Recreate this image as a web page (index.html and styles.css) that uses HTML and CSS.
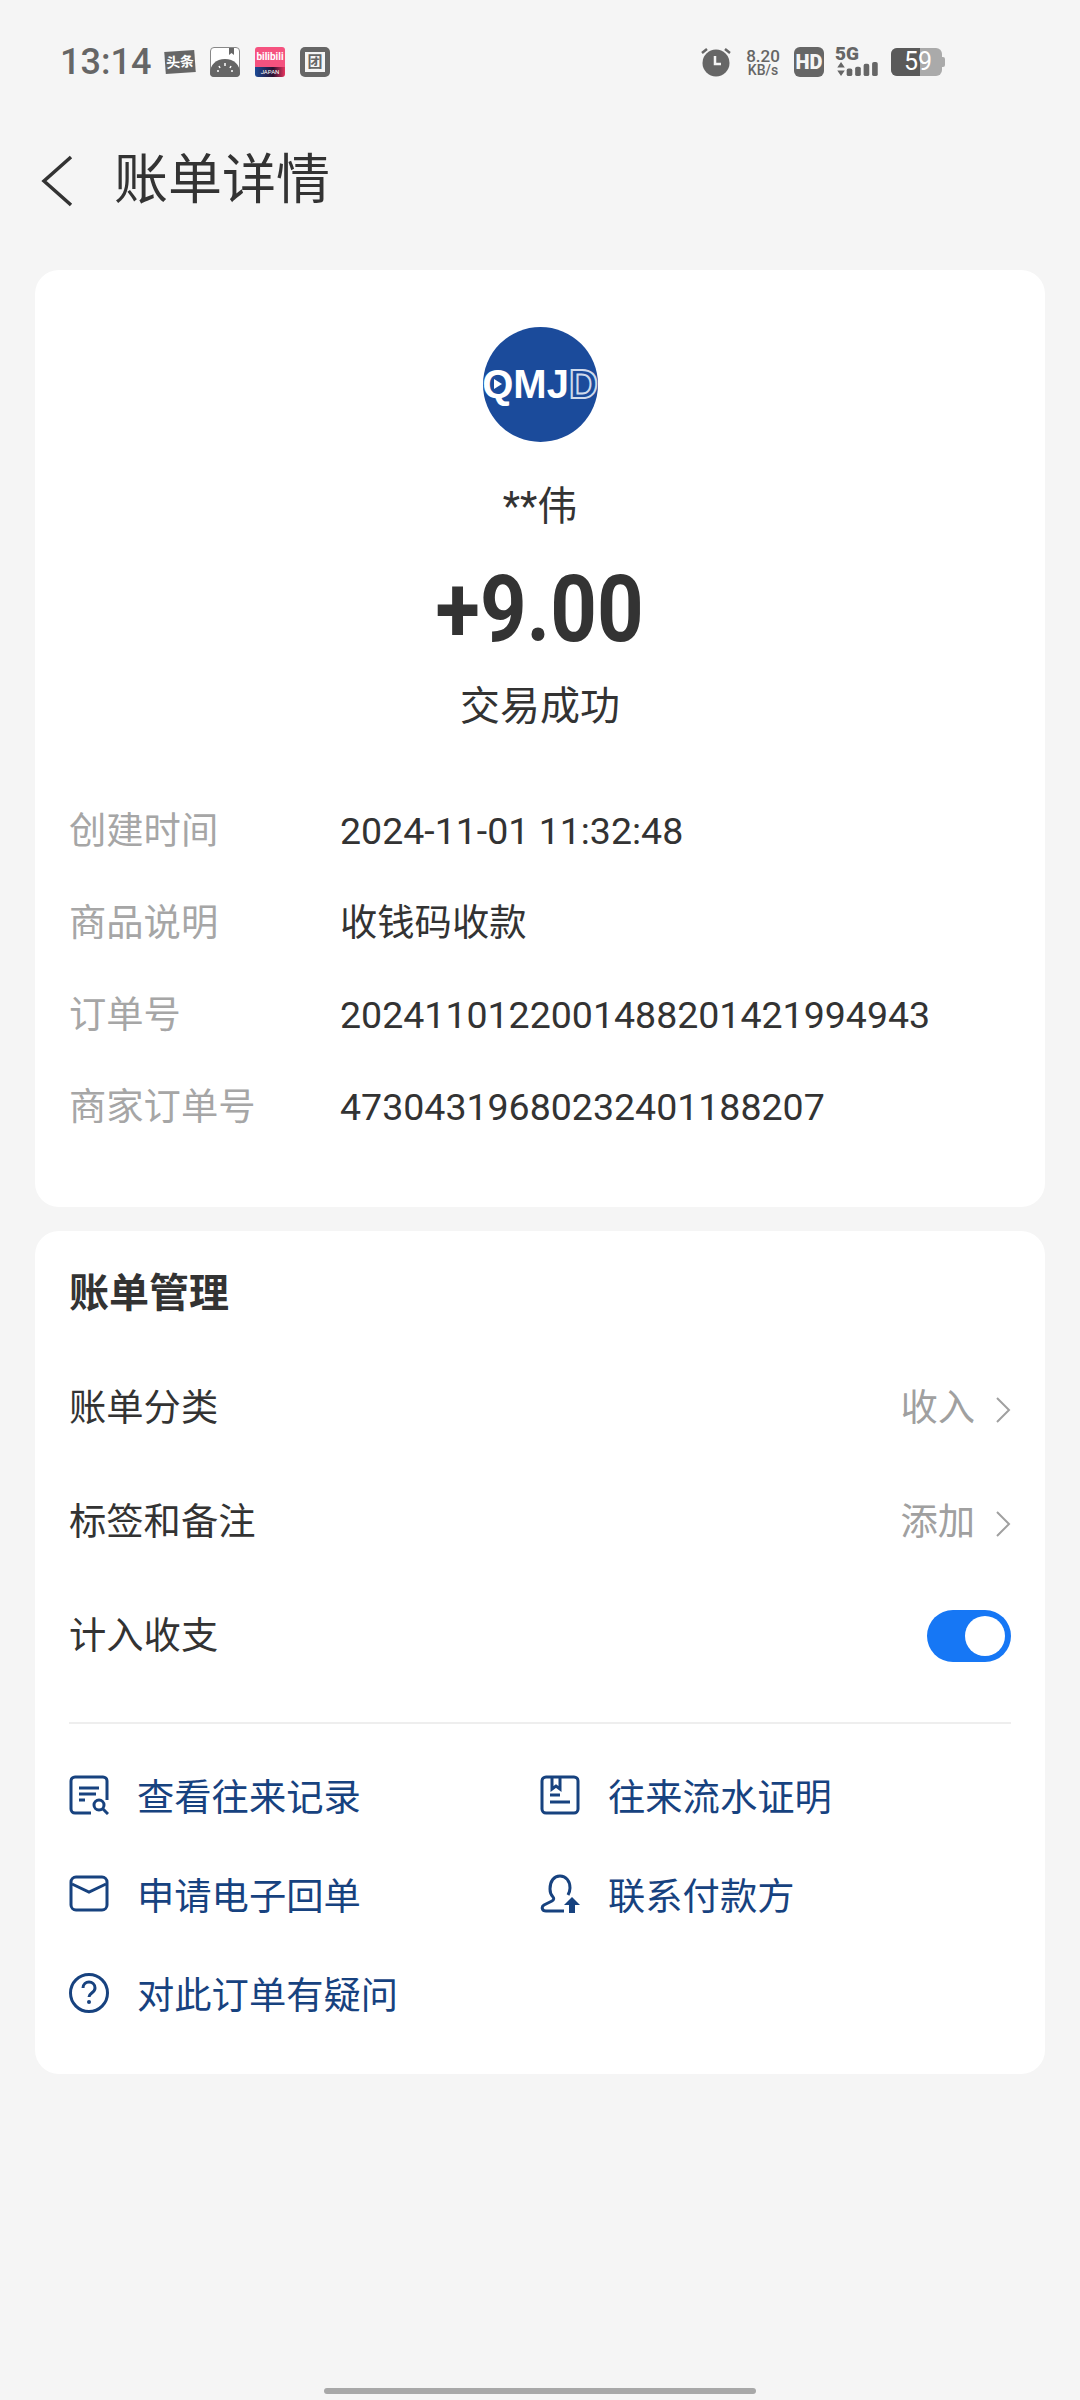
FILE: index.html
```html
<!DOCTYPE html>
<html lang="zh-CN">
<head>
    <meta charset="UTF-8">
    <meta name="viewport" content="width=device-width, initial-scale=1.0">
    <title>账单详情</title>
    <link rel="stylesheet" href="styles.css">
</head>
<body>
    <div class="statusbar">
        <div class="status-left">
            <span class="time">13:14</span>
            <span class="toutiao">头条</span>
            <svg class="sicon" viewBox="0 0 30 30">
                <path d="M4 .5h22a3.500 3.500 0 0 1 3.500 3.500v22a3.500 3.500 0 0 1-3.500 3.500H4A3.500 3.500 0 0 1 .5 26V4A3.500 3.500 0 0 1 4 .5z" fill="#fff" stroke="#888"/>
                <path d="M19 1h5v7l-2.500-2-2.500 2z" fill="#666"/>
                <path d="M0 26c0-8 6-14 15-14s15 6 15 14a4 4 0 0 1-4 4H4a4 4 0 0 1-4-4z" fill="#666"/>
                <path d="M15 16v3M9 19l1 2M21 19l-1 2M7 24h2M21 24h2" stroke="#fff" stroke-width="1.500"/>
            </svg>
            <span class="bili"><span class="bili-top">bilibili</span><span class="bili-bot">JAPAN</span></span>
            <span class="tuan"><span class="tuan-in">团</span></span>
        </div>
        <div class="status-right">
            <svg class="sicon alarm" viewBox="0 0 30 30">
                <path d="M1 6l5-4M29 6l-5-4" stroke="#666" stroke-width="2.500"/>
                <circle cx="15" cy="16" r="13.500" fill="#666"/>
                <path d="M14 9v8h6" stroke="#f5f5f5" stroke-width="2.500" fill="none"/>
            </svg>
            <span class="speed"><b>8.20</b><b class="unit">KB/s</b></span>
            <span class="hd">HD</span>
            <span class="net">
                <span class="net-5g">5G</span>
                <svg class="net-bars" viewBox="0 0 45 17">
                    <path d="M5 1l4 6H1zM1 10h8l-4 6z" fill="#666"/>
                    <rect x="11" y="8" width="6" height="8" rx="2" fill="#666"/>
                    <rect x="20" y="6" width="6" height="10" rx="2" fill="#666"/>
                    <rect x="29" y="3" width="6" height="13" rx="2" fill="#666"/>
                    <rect x="38" y="1" width="6" height="15" rx="2" fill="#666"/>
                </svg>
            </span>
            <span class="battery">
                <span class="battery-body"><span class="battery-fill"></span><span class="battery-num">59</span></span>
                <span class="battery-nub"></span>
            </span>
        </div>
    </div>

    <div class="header">
        <svg class="back" viewBox="0 0 32 52"><path d="M30 2L3 26l27 24" fill="none" stroke="#333" stroke-width="3.500"/></svg>
        <span class="title">账单详情</span>
    </div>

    <div class="card card-top">
        <div class="avatar">
            <span class="logo"><span class="logo-q">Q<span class="logo-play"></span></span>MJ<span class="logo-d">D</span></span>
        </div>
        <div class="name">**伟</div>
        <div class="amount">+9.00</div>
        <div class="state">交易成功</div>

        <div class="info">
            <div class="info-row"><span class="info-label cjk">创建时间</span><span class="digits">2024-11-01 11:32:48</span></div>
            <div class="info-row"><span class="info-label cjk">商品说明</span><span class="cjk">收钱码收款</span></div>
            <div class="info-row"><span class="info-label cjk">订单号</span><span class="digits">2024110122001488201421994943</span></div>
            <div class="info-row"><span class="info-label cjk">商家订单号</span><span class="digits">47304319680232401188207</span></div>
        </div>
    </div>

    <div class="card card-manage">
        <div class="manage-title">账单管理</div>
        <div class="manage-row">
            <span class="cjk">账单分类</span>
            <span class="manage-value cjk">收入
                <svg class="arrow" viewBox="0 0 16 26"><path d="M2 1l12 12L2 25" fill="none" stroke="#a0a0a0" stroke-width="2"/></svg>
            </span>
        </div>
        <div class="manage-row">
            <span class="cjk">标签和备注</span>
            <span class="manage-value cjk">添加
                <svg class="arrow" viewBox="0 0 16 26"><path d="M2 1l12 12L2 25" fill="none" stroke="#a0a0a0" stroke-width="2"/></svg>
            </span>
        </div>
        <div class="manage-row">
            <span class="cjk">计入收支</span>
            <span class="switch"><span class="knob"></span></span>
        </div>

        <div class="links">
            <div class="link">
                <svg class="link-icon" viewBox="0 0 40 40">
                    <path d="M22 38H6a4 4 0 0 1-4-4V6a4 4 0 0 1 4-4h28a4 4 0 0 1 4 4v19" fill="none" stroke="#17427f" stroke-width="3"/>
                    <path d="M10 13h20M10 19h17M10 25h6" stroke="#17427f" stroke-width="3"/>
                    <circle cx="30" cy="30" r="5" fill="none" stroke="#17427f" stroke-width="3"/>
                    <path d="M34 34l5 5" stroke="#17427f" stroke-width="3"/>
                </svg>
                <span>查看往来记录</span>
            </div>
            <div class="link">
                <svg class="link-icon" viewBox="0 0 40 40">
                    <rect x="2" y="2" width="36" height="36" rx="4" fill="none" stroke="#17427f" stroke-width="3"/>
                    <path d="M12 2v12l4-3 4 3V2M10 20h10M10 27h20" fill="none" stroke="#17427f" stroke-width="3"/>
                </svg>
                <span>往来流水证明</span>
            </div>
            <div class="link">
                <svg class="link-icon" viewBox="0 0 40 40">
                    <rect x="2" y="3" width="36" height="33" rx="5" fill="none" stroke="#17427f" stroke-width="3"/>
                    <path d="M3 10l17 8 17-8" fill="none" stroke="#17427f" stroke-width="3"/>
                </svg>
                <span>申请电子回单</span>
            </div>
            <div class="link">
                <svg class="link-icon" viewBox="0 0 40 40">
                    <path d="M24 37H6c-4 0-5-4-2-6l8-4c2-1 2-3 1-4-2-2-3-5-3-8C10 7 14 2 20 2s10 5 10 12c0 2-1 5-2 7" fill="none" stroke="#17427f" stroke-width="3"/>
                    <path d="M32 23l8 8h-5v8h-6v-8h-5z" fill="#17427f"/>
                </svg>
                <span>联系付款方</span>
            </div>
            <div class="link">
                <svg class="link-icon" viewBox="0 0 40 40">
                    <circle cx="20" cy="20" r="18.500" fill="none" stroke="#17427f" stroke-width="3"/>
                    <path d="M14 15c0-4 3-6 6-6s6 2 6 6c0 5-6 5-6 9" fill="none" stroke="#17427f" stroke-width="3"/>
                    <circle cx="20" cy="29" r="2" fill="#17427f"/>
                </svg>
                <span>对此订单有疑问</span>
            </div>
        </div>
    </div>

    <div class="homebar"></div>
</body>
</html>
```

FILE: styles.css
```css
* {
    box-sizing: border-box;
}
html, body {
    margin: 0;
    height: 2400px;
}
body {
    display: flex;
    flex-direction: column;
    background: #f5f5f5;
    color: #333;
    font-family: Roboto, "Noto Sans CJK SC", sans-serif;
    overflow: hidden;
}
/* chinese text sits a little low next to the digits */
.cjk {
    padding-bottom: 6px;
}
.digits {
    font-size: 37.5px;
}

/* status bar */
.statusbar {
    display: flex;
    justify-content: space-between;
    align-items: center;
    height: 30px;
    margin-top: 47px;
    padding: 0 135px 0 60px;
}
.status-left, .status-right {
    display: flex;
    align-items: center;
}
.status-left {
    gap: 15px;
}
.status-right {
    gap: 11px;
}
.time {
    width: 90px;
    font-size: 36px;
    line-height: 30px;
    font-weight: 500;
    color: #666;
}
.sicon {
    width: 30px;
    height: 30px;
}
.alarm {
    margin-right: 4px;
}
.toutiao {
    width: 30px;
    height: 22px;
    background: #666;
    color: #fff;
    font-size: 14px;
    font-weight: 700;
    line-height: 22px;
    text-align: center;
    white-space: nowrap;
    transform: rotate(-4deg);
}
.bili {
    display: flex;
    flex-direction: column;
    width: 30px;
    height: 30px;
    border-radius: 3px;
    overflow: hidden;
    color: #fff;
    text-align: center;
    white-space: nowrap;
}
.bili-top {
    height: 20px;
    background: #f5527f;
    font-size: 10px;
    font-weight: 700;
    line-height: 20px;
}
.bili-bot {
    height: 10px;
    background: linear-gradient(90deg, #1a4a96, #2a1030 60%, #e8345f);
    font-size: 6px;
    line-height: 10px;
}
.tuan {
    display: flex;
    justify-content: center;
    align-items: center;
    width: 30px;
    height: 30px;
    background: #666;
    border-radius: 5px;
}
.tuan-in {
    width: 20px;
    height: 20px;
    background: #f5f5f5;
    color: #666;
    font-size: 15px;
    font-weight: 700;
    line-height: 20px;
    text-align: center;
}
.speed {
    display: flex;
    flex-direction: column;
    width: 34px;
    margin-right: 3px;
    color: #666;
    font-size: 17px;
    line-height: 16px;
    text-align: center;
    white-space: nowrap;
}
.speed b {
    font-weight: 500;
}
.speed .unit {
    font-size: 14px;
    line-height: 13px;
}
.hd {
    width: 30px;
    height: 30px;
    background: #666;
    border-radius: 6px;
    color: #f5f5f5;
    font-size: 20px;
    font-weight: 900;
    line-height: 30px;
    text-align: center;
}
.net {
    display: flex;
    flex-direction: column;
    width: 45px;
    height: 30px;
}
.net-5g {
    color: #666;
    font-size: 19px;
    font-weight: 900;
    line-height: 14px;
}
.net-bars {
    width: 45px;
    height: 16px;
}
.battery {
    display: flex;
    align-items: center;
    width: 54px;
}
.battery-body {
    position: relative;
    width: 51px;
    height: 28px;
    background: #aaa;
    border-radius: 6px;
    overflow: hidden;
}
.battery-nub {
    width: 3px;
    height: 10px;
    background: #aaa;
    border-radius: 0 2px 2px 0;
}
.battery-fill {
    display: block;
    width: 29px;
    height: 100%;
    background: #5a5a5a;
}
/* number sits on top of the fill */
.battery-num {
    position: absolute;
    left: 13px;
    top: 0;
    color: #fff;
    font-size: 25px;
    line-height: 28px;
}

/* header */
.header {
    display: flex;
    align-items: center;
    height: 70px;
    margin-top: 69px;
    padding-left: 41px;
}
.back {
    width: 32px;
    height: 52px;
}
.title {
    margin-left: 41px;
    font-size: 54px;
    line-height: 70px;
}

.card {
    margin: 0 35px;
    background: #fff;
    border-radius: 24px;
}

/* top card */
.card-top {
    display: flex;
    flex-direction: column;
    align-items: center;
    height: 937px;
    margin-top: 54px;
    padding-top: 57px;
}
.avatar {
    display: flex;
    justify-content: center;
    align-items: center;
    width: 115px;
    height: 115px;
    background: #1b4b9b;
    border-radius: 50%;
    overflow: hidden;
}
.logo {
    color: #fff;
    font-family: "Liberation Sans", sans-serif;
    font-size: 40px;
    font-weight: 700;
    white-space: nowrap;
}
.logo-q {
    position: relative;
}
.logo-play {
    position: absolute;
    left: 12px;
    top: 17px;
    border-left: 8px solid #fff;
    border-top: 5px solid transparent;
    border-bottom: 5px solid transparent;
}
.logo-d {
    color: transparent;
    -webkit-text-stroke: 2px #cfdaec;
}
.name {
    margin-top: 41px;
    font-size: 40px;
    line-height: 48px;
}
.amount {
    margin-top: 31px;
    font-size: 92px;
    font-weight: 700;
    line-height: 96px;
    transform: scaleX(.885);
}
.state {
    margin-top: 25px;
    font-size: 40px;
    line-height: 48px;
}
.info {
    align-self: stretch;
    margin-top: 54px;
    padding: 0 34px;
}
.info-row {
    display: flex;
    height: 92px;
    align-items: center;
    font-size: 37.3px;
}
.info-label {
    width: 271px;
    color: #a6a6a6;
}

/* manage card */
.card-manage {
    height: 843px;
    margin-top: 24px;
    padding: 0 34px;
}
.manage-title {
    margin-top: 39px;
    font-size: 40px;
    font-weight: 700;
    line-height: 48px;
}
.manage-row {
    display: flex;
    justify-content: space-between;
    align-items: center;
    height: 114px;
    font-size: 37.3px;
}
.manage-row .cjk {
    padding-bottom: 4px;
}
.manage-title + .manage-row {
    margin-top: 32px;
}
.manage-value {
    display: flex;
    align-items: center;
    gap: 20px;
    color: #a0a0a0;
}
.arrow {
    width: 16px;
    height: 26px;
    margin-top: 9px;
}
.switch {
    display: flex;
    justify-content: flex-end;
    align-items: center;
    width: 84px;
    height: 52px;
    margin-top: 2px;
    padding-right: 6px;
    background: #1677f5;
    border-radius: 26px;
}
.knob {
    width: 40px;
    height: 40px;
    background: #fff;
    border-radius: 50%;
}
.links {
    display: grid;
    grid-template-columns: 471px 1fr;
    margin-top: 30px;
    padding-top: 21px;
    border-top: 2px solid #eee;
}
.link {
    display: flex;
    align-items: center;
    height: 99px;
    color: #17427f;
    font-size: 37.3px;
}
.link-icon {
    width: 40px;
    height: 40px;
    margin-right: 28px;
}

.homebar {
    width: 432px;
    height: 6px;
    margin: auto auto 6px;
    background: #a8a8a8;
    border-radius: 3px;
}
```
